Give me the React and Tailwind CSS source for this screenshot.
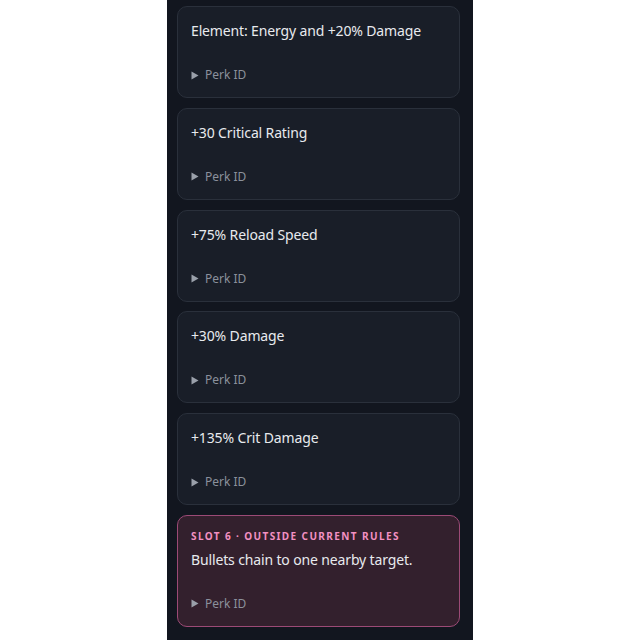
const PERKS = [
  { title: 'Element: Energy and +20% Damage' },
  { title: '+30 Critical Rating' },
  { title: '+75% Reload Speed' },
  { title: '+30% Damage' },
  { title: '+135% Crit Damage' },
  { title: 'Bullets chain to one nearby target.', slot: 'Slot 6 · Outside current rules' },
];

const PerkCard = ({ title, slot }) => (
  <div
    className={`rounded-[10px] border px-[13px] pt-[14px] pb-[14px] flex flex-col ${
      slot ? 'bg-[#33202d] border-[#9c4a76]' : 'bg-[#191e28] border-[#2a303b]'
    }`}
  >
    {slot && (
      <p className="text-[10px] leading-[12px] font-bold uppercase tracking-[0.14em] text-[#f290c2] mb-[8px]">
        {slot}
      </p>
    )}
    <p className="text-[14px] leading-[20px] tracking-[-0.01em] text-[#e8eaee]">{title}</p>
    <div className="mt-[26px] flex items-center text-[12px] leading-[16px] text-[#8b919c]">
      <svg width="14" height="9" viewBox="0 0 14 9" className="shrink-0">
        <path d="M0.5 0.5 L7.5 4.5 L0.5 8.5 Z" fill="#9aa0aa" />
      </svg>
      <span>Perk ID</span>
    </div>
  </div>
);

export default function App() {
  return (
    <div className="w-[640px] h-[640px] bg-white flex justify-center overflow-hidden" style={{ fontFamily: '"Noto Sans", sans-serif' }}>
      <div className="w-[306px] h-full bg-[#12161f] pt-[6px] pl-[10px] pr-[13px] flex flex-col gap-[9.8px]">
        {PERKS.map((p, i) => (
          <PerkCard key={i} {...p} />
        ))}
      </div>
    </div>
  );
}
